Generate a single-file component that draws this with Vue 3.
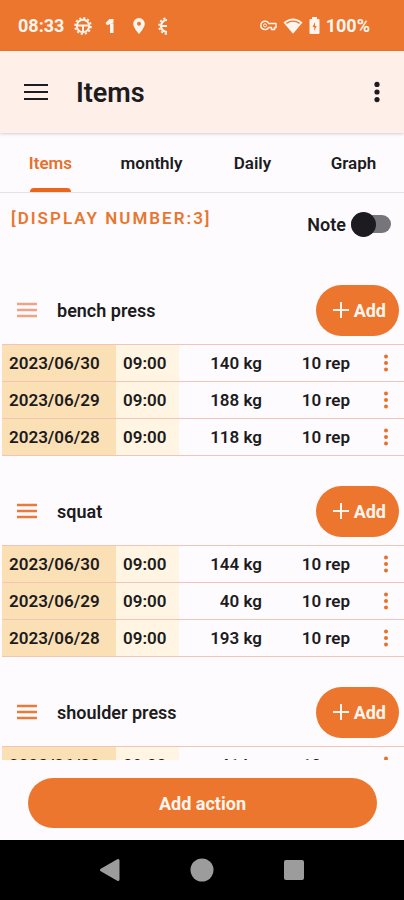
<script setup>
import { ref } from 'vue'

const tabs = ['Items', 'monthly', 'Daily', 'Graph']
const activeTab = ref('Items')
const noteOn = ref(false)

const sections = [
  {
    name: 'bench press',
    soft: true,
    rows: [
      { date: '2023/06/30', time: '09:00', weight: 140, reps: 10 },
      { date: '2023/06/29', time: '09:00', weight: 188, reps: 10 },
      { date: '2023/06/28', time: '09:00', weight: 118, reps: 10 },
    ],
  },
  {
    name: 'squat',
    rows: [
      { date: '2023/06/30', time: '09:00', weight: 144, reps: 10 },
      { date: '2023/06/29', time: '09:00', weight: 40, reps: 10 },
      { date: '2023/06/28', time: '09:00', weight: 193, reps: 10 },
    ],
  },
  {
    name: 'shoulder press',
    rows: [{ date: '2023/06/30', time: '09:00', weight: 41, reps: 10 }],
  },
]
</script>

<template>
  <div class="app">
    <div class="status">
      <span class="status-text">08:33</span>
      <svg class="gear" width="18" height="18" viewBox="0 0 18 18">
        <circle cx="9" cy="9" r="6.200" fill="none" stroke="currentColor" stroke-width="2" />
        <circle cx="9" cy="9" r="7.900" fill="none" stroke="currentColor" stroke-width="1.800" stroke-dasharray="2.200 1.936" />
        <path d="M3.500 8.500h11M9 8.500V15" fill="none" stroke="currentColor" stroke-width="2" />
      </svg>
      <svg class="one" width="10" height="16" viewBox="0 0 10 16">
        <path d="M0.500 5 4.500 1H8.500v3.500L2.200 7.300z" fill="currentColor" />
        <path d="M5 5.300h3.500V15H5z" fill="currentColor" />
      </svg>
      <svg class="pin" width="12" height="16" viewBox="0 0 12 16">
        <path fill-rule="evenodd" fill="currentColor" d="M6 0a5.800 5.800 0 0 0-5.800 5.800C.2 10 6 16 6 16s5.800-6 5.800-10.200A5.800 5.800 0 0 0 6 0zm0 3.800a2 2 0 1 1 0 4 2 2 0 0 1 0-4z" />
      </svg>
      <svg class="half" width="9" height="18" viewBox="0 0 9 18">
        <circle cx="9" cy="9" r="6" fill="none" stroke="currentColor" stroke-width="2.200" />
        <circle cx="9" cy="9" r="7.900" fill="none" stroke="currentColor" stroke-width="1.800" stroke-dasharray="2.200 1.936" />
        <path d="M3.500 9H9" stroke="currentColor" stroke-width="2" />
      </svg>
      <span class="spacer"></span>
      <svg class="key" width="17" height="11" viewBox="0 0 17 11">
        <path d="M8.700 3.400H16v4h-1.500v2.200h-3V7.400H8.700A4.200 4.200 0 1 1 8.700 3.400z" fill="none" stroke="currentColor" stroke-width="1.5" stroke-linejoin="round" />
        <circle cx="5" cy="5.400" r="1.500" fill="none" stroke="currentColor" stroke-width="1" />
      </svg>
      <svg class="wifi" width="20" height="16" viewBox="0 0 20 16">
        <path d="M0.500 4.500Q10-3.500 19.500 4.500L10 15.800z" fill="currentColor" />
        <path d="M3.400 5.400Q10 1 16.600 5.400" fill="none" stroke="#ec762d" stroke-width="1.300" />
      </svg>
      <svg class="battery" width="11" height="17" viewBox="0 0 11 17">
        <path d="M3 0h5v2h1.500a1 1 0 0 1 1 1v13a1 1 0 0 1-1 1h-8a1 1 0 0 1-1-1V3a1 1 0 0 1 1-1H3z" fill="currentColor" />
        <path d="M6 5 3.600 10h1.700v4l2.400-5H6z" fill="#ec762d" />
      </svg>
      <span class="status-text">100%</span>
    </div>

    <header class="bar">
      <button class="icon-btn" aria-label="Menu">
        <svg width="24" height="18" viewBox="0 0 24 18"><path d="M0 2h24M0 9h24M0 16h24" stroke="currentColor" stroke-width="2.200" /></svg>
      </button>
      <h1>Items</h1>
      <button class="icon-btn" aria-label="More options">
        <svg width="6" height="22" viewBox="0 0 6 22" fill="currentColor"><circle cx="3" cy="3.400" r="2.600" /><circle cx="3" cy="11" r="2.600" /><circle cx="3" cy="18.600" r="2.600" /></svg>
      </button>
    </header>

    <nav class="tabs">
      <button v-for="t in tabs" :key="t" class="tab" :class="{ active: t === activeTab }" @click="activeTab = t">
        {{ t }}
      </button>
    </nav>

    <div class="info">
      <span class="display">[DISPLAY NUMBER:3]</span>
      <label class="note">
        <span>Note</span>
        <input v-model="noteOn" class="switch" type="checkbox" role="switch" />
      </label>
    </div>

    <main class="list">
      <section v-for="s in sections" :key="s.name" class="exercise">
        <div class="head">
          <svg class="handle" :class="{ soft: s.soft }" width="20" height="16" viewBox="0 0 20 16"><path d="M0 2h20M0 8h20M0 14h20" stroke="currentColor" stroke-width="2.400" /></svg>
          <h2>{{ s.name }}</h2>
          <button class="add">
            <svg width="16" height="16" viewBox="0 0 16 16"><path d="M8 0v16M0 8h16" stroke="currentColor" stroke-width="2" /></svg>
            <span>Add</span>
          </button>
        </div>
        <table>
          <tbody>
            <tr v-for="r in s.rows" :key="r.date">
              <td class="date">{{ r.date }}</td>
              <td class="time">{{ r.time }}</td>
              <td class="weight">{{ r.weight }} kg</td>
              <td class="reps">{{ r.reps }} rep</td>
              <td class="more">
                <button class="dots" aria-label="Row options">
                  <svg width="4" height="18" viewBox="0 0 4 18" fill="currentColor"><circle cx="2" cy="2.500" r="2" /><circle cx="2" cy="9" r="2" /><circle cx="2" cy="15.500" r="2" /></svg>
                </button>
              </td>
            </tr>
          </tbody>
        </table>
      </section>
    </main>

    <div class="footer">
      <button class="add-action">Add action</button>
    </div>

    <div class="sysnav">
      <button aria-label="Back"><svg width="22" height="24" viewBox="0 0 22 24"><path d="M19 2.500v19L2.500 12z" fill="currentColor" stroke="currentColor" stroke-width="3" stroke-linejoin="round" /></svg></button>
      <button aria-label="Home"><svg width="24" height="24" viewBox="0 0 24 24"><circle cx="12" cy="12" r="11.500" fill="currentColor" /></svg></button>
      <button aria-label="Recent apps"><svg width="22" height="22" viewBox="0 0 22 22"><rect x="1" y="1" width="20" height="20" rx="2" fill="currentColor" /></svg></button>
    </div>
  </div>
</template>

<style>
body {
  margin: 0;
}
</style>

<style scoped>
.app {
  display: flex;
  flex-direction: column;
  height: 100vh;
  overflow: hidden;
  background: #fefbff;
  color: #1c1b20;
  font-family: Roboto, sans-serif;
  font-size: 17px;
  font-weight: 600;
}
button {
  margin: 0;
  padding: 0;
  border: 0;
  background: none;
  color: inherit;
  font: inherit;
  cursor: pointer;
}
svg {
  display: block;
  flex: none;
}
.status {
  flex: none;
  display: flex;
  align-items: center;
  height: 51px;
  padding: 0 34px 0 18px;
  background: #ec762d;
  color: #fff5ee;
}
.status-text {
  font-size: 18px;
  font-weight: 700;
}
.gear {
  margin-left: 10px;
}
.one {
  margin-left: 13px;
}
.pin {
  margin-left: 18px;
}
.half {
  margin-left: 13px;
}
.spacer {
  flex: 1;
}
.wifi {
  margin-left: 6px;
}
.battery {
  margin: 0 6px;
}
.bar {
  flex: none;
  display: flex;
  align-items: center;
  height: 82px;
  padding: 0 24px;
  background: #feefe9;
  box-shadow: 0 1px 3px #0000002e;
  z-index: 1;
}
h1 {
  flex: 1;
  margin: 2px 0 0 28px;
  font-size: 27px;
  font-weight: 600;
}
.tabs {
  flex: none;
  display: grid;
  grid-template-columns: repeat(4, 1fr);
  height: 59px;
  border-bottom: 1px solid #e4e2e6;
}
.tab {
  display: flex;
  flex-direction: column;
  align-items: center;
  justify-content: space-between;
  padding-top: 20px;
}
.tab.active {
  color: #e8702a;
}
.tab.active::after {
  content: '';
  width: 41px;
  height: 4px;
  border-radius: 4px 4px 0 0;
  background: #e9661a;
}
.info {
  flex: none;
  display: flex;
  justify-content: space-between;
  align-items: flex-start;
  height: 92px;
  box-sizing: border-box;
  padding: 15px 13px 0 11px;
}
.display {
  color: #e8762f;
  line-height: 20px;
  letter-spacing: 2px;
}
.note {
  display: flex;
  align-items: center;
  gap: 5px;
  padding-top: 3px;
  font-size: 18px;
}
.switch {
  appearance: none;
  display: flex;
  align-items: center;
  width: 40px;
  height: 18px;
  margin: 4px 0;
  border-radius: 9px;
  background: #77757c;
}
.switch::before {
  content: '';
  width: 25px;
  height: 25px;
  flex: none;
  border-radius: 50%;
  background: #1c1b20;
}
.switch:checked {
  justify-content: flex-end;
}
.list {
  flex: 1;
  min-height: 0;
  overflow: hidden;
}
.exercise {
  margin-bottom: 30px;
}
.head {
  display: flex;
  align-items: center;
  height: 50px;
  margin-bottom: 9px;
  padding: 0 5px 0 17px;
}
.handle {
  color: #e97a38;
}
.handle.soft {
  color: #efa384;
}
h2 {
  flex: 1;
  margin: 0 0 0 20px;
  font-size: 18px;
  font-weight: 600;
}
.add {
  display: flex;
  align-items: center;
  gap: 5px;
  height: 51px;
  padding: 0 13px 0 17px;
  border-radius: 26px;
  background: #ec762d;
  color: #fff5ee;
  font-size: 18px;
  font-weight: 700;
}
table {
  width: calc(100% - 2px);
  margin-left: 2px;
  border-collapse: collapse;
  table-layout: fixed;
}
tr {
  height: 37px;
}
td {
  box-sizing: border-box;
  padding: 0;
  border-top: 1px solid #f2c4b5;
  border-bottom: 1px solid #f2c4b5;
  white-space: nowrap;
}
.date {
  width: 114px;
  padding-left: 7px;
  background: #fbe0b6;
}
.time {
  width: 63px;
  padding-left: 7px;
  background: #fff5e2;
}
.weight {
  width: 83px;
  text-align: right;
}
.reps {
  width: 88px;
  text-align: right;
}
.dots {
  display: block;
  margin: 0 16px 0 auto;
  color: #e9702a;
}
.footer {
  flex: none;
  padding: 18px 27px 12px 28px;
}
.add-action {
  display: block;
  width: 100%;
  height: 50px;
  border-radius: 25px;
  background: #ec762d;
  color: #fff5ee;
  font-size: 18px;
  font-weight: 700;
}
.sysnav {
  flex: none;
  display: flex;
  justify-content: center;
  align-items: center;
  gap: 69px;
  height: 60px;
  background: #000;
  color: #9c9c9c;
}
</style>
